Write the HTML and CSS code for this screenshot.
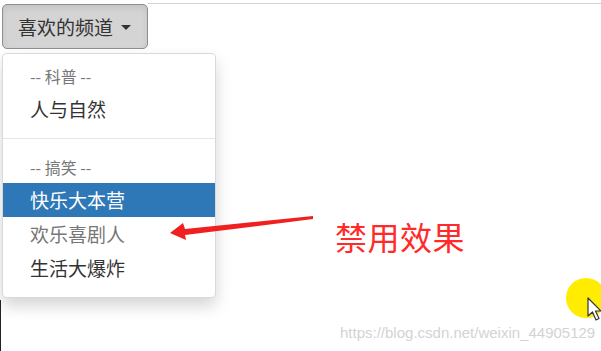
FILE: index.html
```html
<!DOCTYPE html>
<html lang="zh-CN">
<head>
<meta charset="utf-8">
<title>下拉菜单</title>
<link rel="stylesheet" href="styles.css">
</head>
<body>
<div class="page">
  <div class="top">
    <button class="btn" type="button">喜欢的频道<span class="caret"></span></button>
    <div class="rule"></div>
  </div>
  <ul class="menu">
    <li class="header">-- 科普 --</li>
    <li class="item">人与自然</li>
    <li class="divider"></li>
    <li class="header">-- 搞笑 --</li>
    <li class="item active">快乐大本营</li>
    <li class="item disabled">欢乐喜剧人</li>
    <li class="item">生活大爆炸</li>
  </ul>
  <div class="edge"></div>

  <svg class="arrow" width="160" height="40" viewBox="0 0 160 40">
    <path d="M145 5 L17 18 L15 12 L2 22 L18 29 L17 24 L145 8 Z" fill="#f02020"/>
  </svg>
  <div class="note">禁用效果</div>
  <div class="mark">https://blog.csdn.net/weixin_44905129</div>
  <div class="spot"></div>
  <svg class="cursor" width="16" height="26" viewBox="0 0 16 26">
    <path d="M1 1 L1 19 L5.5 15 L9 23 L12 21.5 L8.5 14 L14 14 Z" fill="#fff" stroke="#333" stroke-width="1.2" stroke-linejoin="round"/>
  </svg>
</div>
</body>
</html>
```
FILE: styles.css
```css
html, body {
  margin: 0;
  padding: 0;
  background: #fff;
}
.page {
  position: relative;
  width: 601px;
  height: 351px;
  overflow: hidden;
  font-family: "Noto Sans CJK SC", "Liberation Sans", sans-serif;
  color: #333;
}
.top {
  display: flex;
  align-items: flex-start;
  padding-top: 3px;
}
.btn {
  margin: 1px 0 0 2px;
  height: 45px;
  padding: 0 16px 0 15px;
  display: flex;
  align-items: center;
  gap: 8px;
  font-family: "Noto Sans CJK SC", sans-serif;
  font-size: 19px;
  color: #333;
  background: #d4d4d4;
  border: 1px solid #8e8e8e;
  border-radius: 5px;
  box-shadow: inset 0 3px 6px rgba(0,0,0,0.08);
}
.caret {
  width: 0;
  height: 0;
  border-top: 5px solid #333;
  border-left: 5px solid transparent;
  border-right: 5px solid transparent;
  margin-top: 2px;
}
.rule {
  flex: 1;
  height: 1px;
  background: #d4d4d4;
}
.menu {
  list-style: none;
  margin: 4px 0 0 2px;
  padding: 6px 0 12px;
  width: 212px;
  background: #fff;
  border: 1px solid rgba(0,0,0,0.15);
  border-radius: 5px;
  box-shadow: 0 8px 16px rgba(0,0,0,0.17);
}
.header {
  font-size: 16px;
  line-height: 22px;
  padding: 5px 27px;
  color: #777;
}
.item {
  font-size: 19px;
  line-height: 26px;
  padding: 4px 27px;
  color: #333;
  white-space: nowrap;
}
.item.active {
  background: #2e78b8;
  color: #fff;
}
.item.disabled {
  color: #777;
}
.divider {
  height: 1px;
  margin: 12px 0;
  background: #e5e5e5;
}
.edge {
  width: 0;
  height: 52px;
  border-left: 1px solid #222;
  margin-top: 2px;
}
.arrow {
  position: absolute;
  left: 168px;
  top: 211px;
}
.note {
  position: absolute;
  left: 335px;
  top: 216px;
  font-size: 32px;
  line-height: 40px;
  color: #ff2a2a;
  letter-spacing: 0.5px;
}
.mark {
  position: absolute;
  left: 340px;
  top: 324px;
  font-family: "Liberation Sans", Arial, sans-serif;
  font-size: 15px;
  line-height: 18px;
  color: #d3d3d3;
}
.spot {
  position: absolute;
  left: 566px;
  top: 278px;
  width: 40px;
  height: 40px;
  border-radius: 50%;
  background: #ffec00;
}
.cursor {
  position: absolute;
  left: 587px;
  top: 297px;
}
```
